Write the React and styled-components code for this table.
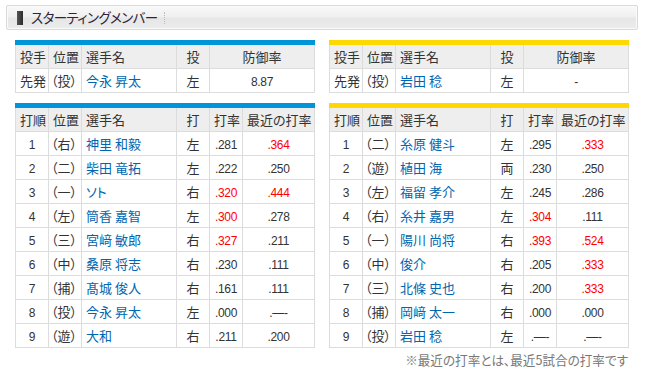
import styled, { createGlobalStyle } from "styled-components";

const GlobalStyle = createGlobalStyle`
  body {
    margin: 0;
    background: #fff;
    color: #333;
    font-family: "Noto Sans CJK JP", "Noto Sans", sans-serif;
  }
`;

const pitchers = {
  left: { pos: "投", name: "今永 昇太", hand: "左", era: "8.87" },
  right: { pos: "投", name: "岩田 稔", hand: "左", era: "-" },
};

// [打順, 位置, 選手名, 打, 打率, 最近の打率]; "*" = 赤字
const lineups = {
  left: [
    [1, "右", "神里 和毅", "左", ".281", "*.364"],
    [2, "二", "柴田 竜拓", "左", ".222", ".250"],
    [3, "一", "ソト", "右", "*.320", "*.444"],
    [4, "左", "筒香 嘉智", "左", "*.300", ".278"],
    [5, "三", "宮﨑 敏郎", "右", "*.327", ".211"],
    [6, "中", "桑原 将志", "右", ".230", ".111"],
    [7, "捕", "髙城 俊人", "右", ".161", ".111"],
    [8, "投", "今永 昇太", "左", ".000", ".—-"],
    [9, "遊", "大和", "右", ".211", ".200"],
  ],
  right: [
    [1, "二", "糸原 健斗", "左", ".295", "*.333"],
    [2, "遊", "植田 海", "両", ".230", ".250"],
    [3, "左", "福留 孝介", "左", ".245", ".286"],
    [4, "右", "糸井 嘉男", "左", "*.304", ".111"],
    [5, "一", "陽川 尚将", "右", "*.393", "*.524"],
    [6, "中", "俊介", "右", ".205", "*.333"],
    [7, "三", "北條 史也", "右", ".200", "*.333"],
    [8, "捕", "岡﨑 太一", "右", ".000", ".000"],
    [9, "投", "岩田 稔", "左", ".—-", ".—-"],
  ],
};

const teamColor = { left: "#0095d9", right: "#ffd800" };

function Avg({ value }) {
  const hot = value.startsWith("*");
  return <Num $hot={hot}>{hot ? value.slice(1) : value}</Num>;
}

function PitcherTable({ side }) {
  const p = pitchers[side];
  return (
    <Table $bar={teamColor[side]}>
      <colgroup>
        <col width="33" />
        <col width="33" />
        <col width="95" />
        <col width="33" />
        <col />
      </colgroup>
      <thead>
        <tr>
          <Th>投手</Th>
          <Th>位置</Th>
          <Th>選手名</Th>
          <Th $center>投</Th>
          <Th $center>防御率</Th>
        </tr>
      </thead>
      <tbody>
        <tr>
          <Td>先発</Td>
          <Td $pos>（{p.pos}）</Td>
          <Td>
            <Name>{p.name}</Name>
          </Td>
          <Td $center>{p.hand}</Td>
          <Td $center>
            <Num>{p.era}</Num>
          </Td>
        </tr>
      </tbody>
    </Table>
  );
}

function LineupTable({ side }) {
  return (
    <Table $bar={teamColor[side]}>
      <colgroup>
        <col width="33" />
        <col width="33" />
        <col width="95" />
        <col width="33" />
        <col width="33" />
        <col />
      </colgroup>
      <thead>
        <tr>
          <Th $center>打順</Th>
          <Th>位置</Th>
          <Th>選手名</Th>
          <Th $center>打</Th>
          <Th $center>打率</Th>
          <Th $center>最近の打率</Th>
        </tr>
      </thead>
      <tbody>
        {lineups[side].map(([order, pos, name, hand, avg, recent]) => (
          <tr key={order}>
            <Td $center>
              <Num>{order}</Num>
            </Td>
            <Td $pos>（{pos}）</Td>
            <Td>
              <Name>{name}</Name>
            </Td>
            <Td $center>{hand}</Td>
            <Td $center>
              <Avg value={avg} />
            </Td>
            <Td $center>
              <Avg value={recent} />
            </Td>
          </tr>
        ))}
      </tbody>
    </Table>
  );
}

export default function App() {
  return (
    <>
      <GlobalStyle />
      <Page>
        <TitleBar>
          <TitleMark />
          <Title>スターティングメンバー</Title>
          <TitleDots />
        </TitleBar>

        <Grid>
          <PitcherTable side="left" />
          <PitcherTable side="right" />
          <LineupTable side="left" />
          <LineupTable side="right" />
          <Note>※最近の打率とは、最近5試合の打率です</Note>
        </Grid>
      </Page>
    </>
  );
}

/* ================= STYLED COMPONENTS ================= */
const Page = styled.div`
  width: 645px;
  padding: 5px 0 0 6px;
  box-sizing: border-box;
`;

const TitleBar = styled.div`
  width: 632px;
  height: 25px;
  box-sizing: border-box;
  display: flex;
  align-items: center;
  padding-left: 10px;
  border: 1px solid #d9d9d9;
  border-radius: 2px;
  box-shadow: inset 0 0 0 1px #fafafa;
  background: linear-gradient(
    #f9f9f9 0%,
    #f0f0f0 45%,
    #e6e6e6 55%,
    #ececec 100%
  );
`;

const TitleMark = styled.span`
  width: 6px;
  height: 14px;
  background: linear-gradient(90deg, #555, #2c2c2c);
`;

const Title = styled.h1`
  margin: 0 0 0 8px;
  font-size: 13.5px;
  font-weight: normal;
  color: #2e2438;
  font-feature-settings: "palt";
  letter-spacing: -0.6px;
  line-height: 1;
`;

const TitleDots = styled.span`
  margin-left: 6px;
  height: 12px;
  border-left: 1px dotted #bbb;
`;

const Grid = styled.div`
  display: grid;
  grid-template-columns: 300px 300px;
  column-gap: 14px;
  row-gap: 10px;
  margin: 10px 0 0 9px;
`;

const Table = styled.table`
  width: 300px;
  table-layout: fixed;
  border-collapse: collapse;
  border-top: 5px solid ${(p) => p.$bar};
  font-size: 13px;
  color: #333;
`;

const cell = `
  height: 23px;
  padding: 0 4px;
  border: 1px solid #dcdcdc;
  white-space: nowrap;
  overflow: hidden;
  line-height: 1;
  font-feature-settings: "palt";
`;

const Th = styled.th`
  ${cell}
  background: #eeeeee;
  font-weight: normal;
  text-align: ${(p) => (p.$center ? "center" : "left")};
`;

const Td = styled.td`
  ${cell}
  background: #fff;
  text-align: ${(p) => (p.$center ? "center" : "left")};
  padding-left: ${(p) => (p.$pos ? "2px" : "4px")};
`;

const Name = styled.span`
  color: #0066b0;
`;

const Num = styled.span`
  font-family: "Liberation Sans", sans-serif;
  font-size: 12px;
  letter-spacing: -0.3px;
  color: ${(p) => (p.$hot ? "#ff0000" : "#333")};
`;

const Note = styled.p`
  grid-column: 2;
  margin: -6px 1px 0 0;
  text-align: right;
  font-size: 12.6px;
  line-height: 1.3;
  color: #777;
  font-feature-settings: "palt";
`;
